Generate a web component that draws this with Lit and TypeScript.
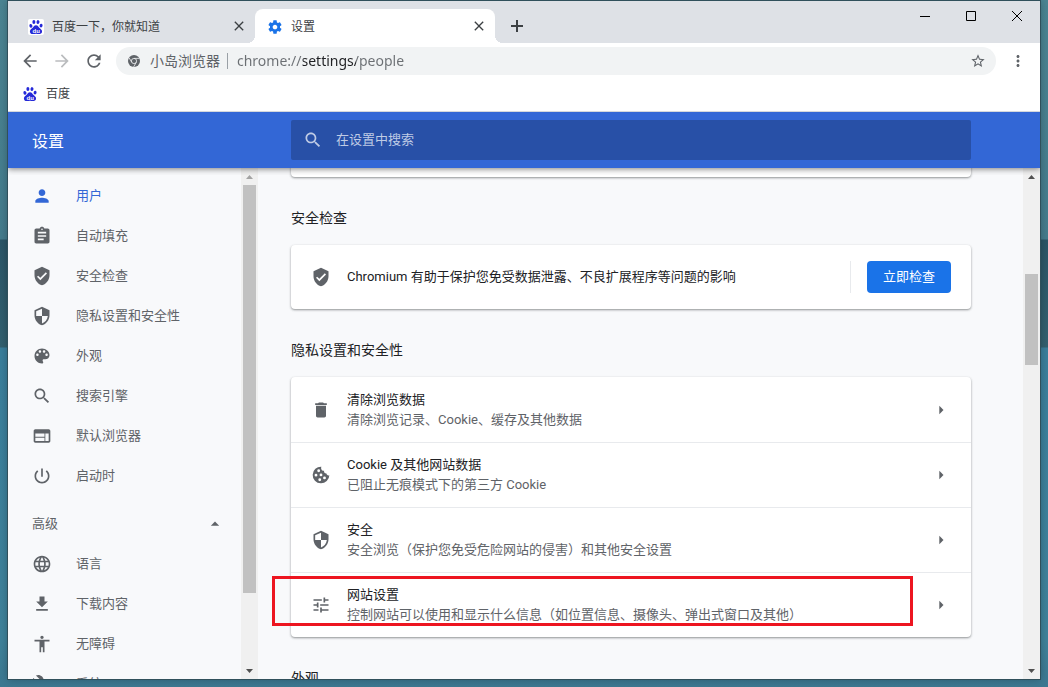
import { LitElement, html, svg, css } from "lit";
import { customElement, property, state } from "lit/decorators.js";
import { classMap } from "lit/directives/class-map.js";

const ICONS: Record<string, string> = {
  person:
    "M12 12c2.21 0 4-1.79 4-4s-1.79-4-4-4-4 1.79-4 4 1.79 4 4 4zm0 2c-2.67 0-8 1.34-8 4v2h16v-2c0-2.66-5.33-4-8-4z",
  assignment:
    "M19 3h-4.18C14.4 1.84 13.3 1 12 1c-1.3 0-2.4.84-2.82 2H5c-1.1 0-2 .9-2 2v14c0 1.1.9 2 2 2h14c1.1 0 2-.9 2-2V5c0-1.1-.9-2-2-2zm-7 0c.55 0 1 .45 1 1s-.45 1-1 1-1-.45-1-1 .45-1 1-1zm2 14H7v-2h7v2zm3-4H7v-2h10v2zm0-4H7V7h10v2z",
  verified:
    "M12 1L3 5v6c0 5.55 3.84 10.74 9 12 5.16-1.26 9-6.45 9-12V5l-9-4zm-2 16l-4-4 1.41-1.41L10 14.17l6.59-6.59L18 9l-8 8z",
  security:
    "M12 1L3 5v6c0 5.55 3.84 10.74 9 12 5.16-1.26 9-6.45 9-12V5l-9-4zm0 10.99h7c-.53 4.12-3.28 7.79-7 8.94V12H5V6.3l7-3.11v8.8z",
  palette:
    "M12 3c-4.97 0-9 4.03-9 9s4.03 9 9 9c.83 0 1.5-.67 1.5-1.5 0-.39-.15-.74-.39-1.01-.23-.26-.38-.61-.38-.99 0-.83.67-1.5 1.5-1.5H16c2.76 0 5-2.24 5-5 0-4.42-4.03-8-9-8zm-5.5 9c-.83 0-1.5-.67-1.5-1.5S5.67 9 6.5 9 8 9.67 8 10.5 7.33 12 6.5 12zm3-4C8.67 8 8 7.33 8 6.5S8.67 5 9.5 5s1.5.67 1.5 1.5S10.33 8 9.5 8zm5 0c-.83 0-1.5-.67-1.5-1.5S13.67 5 14.5 5s1.5.67 1.5 1.5S15.33 8 14.5 8zm3 4c-.83 0-1.5-.67-1.5-1.5S16.67 9 17.5 9s1.5.67 1.5 1.5-.67 1.5-1.5 1.5z",
  search:
    "M15.5 14h-.79l-.28-.27C15.41 12.59 16 11.11 16 9.5 16 5.91 13.09 3 9.5 3S3 5.91 3 9.5 5.91 16 9.5 16c1.61 0 3.09-.59 4.23-1.57l.27.28v.79l5 4.99L20.49 19l-4.99-5zm-6 0C7.01 14 5 11.99 5 9.5S7.01 5 9.5 5 14 7.01 14 9.5 11.99 14 9.5 14z",
  web: "M20 4H4c-1.1 0-1.99.9-1.99 2L2 18c0 1.1.9 2 2 2h16c1.1 0 2-.9 2-2V6c0-1.1-.9-2-2-2zm-5 14H4v-4h11v4zm0-5H4V9h11v4zm5 5h-4V9h4v9z",
  power:
    "M13 3h-2v10h2V3zm4.83 2.17l-1.42 1.42C17.99 7.86 19 9.81 19 12c0 3.87-3.13 7-7 7s-7-3.13-7-7c0-2.19 1.01-4.14 2.58-5.42L6.17 5.17C4.23 6.82 3 9.26 3 12c0 4.97 4.03 9 9 9s9-4.03 9-9c0-2.74-1.23-5.18-3.17-6.83z",
  language:
    "M11.99 2C6.47 2 2 6.48 2 12s4.47 10 9.99 10C17.52 22 22 17.52 22 12S17.52 2 11.99 2zm6.93 6h-2.95c-.32-1.25-.78-2.45-1.38-3.56 1.84.63 3.37 1.91 4.33 3.56zM12 4.04c.83 1.2 1.48 2.53 1.91 3.96h-3.82c.43-1.43 1.08-2.76 1.91-3.96zM4.26 14C4.1 13.36 4 12.69 4 12s.1-1.36.26-2h3.38c-.08.66-.14 1.32-.14 2 0 .68.06 1.34.14 2H4.26zm.82 2h2.95c.32 1.25.78 2.45 1.38 3.56-1.84-.63-3.37-1.9-4.33-3.56zm2.95-8H5.08c.96-1.66 2.49-2.93 4.33-3.56C8.81 5.55 8.35 6.75 8.03 8zM12 19.96c-.83-1.2-1.48-2.53-1.91-3.96h3.82c-.43 1.43-1.08 2.76-1.91 3.96zM14.34 14H9.66c-.09-.66-.16-1.32-.16-2 0-.68.07-1.35.16-2h4.68c.09.65.16 1.32.16 2 0 .68-.07 1.34-.16 2zm.25 5.56c.6-1.11 1.06-2.31 1.38-3.56h2.95c-.96 1.65-2.49 2.93-4.33 3.56zM16.36 14c.08-.66.14-1.32.14-2 0-.68-.06-1.34-.14-2h3.38c.16.64.26 1.31.26 2s-.1 1.36-.26 2h-3.38z",
  download: "M19 9h-4V3H9v6H5l7 7 7-7zM5 18v2h14v-2H5z",
  accessibility:
    "M12 2c1.1 0 2 .9 2 2s-.9 2-2 2-2-.9-2-2 .9-2 2-2zm9 7h-6v13h-2v-6h-2v6H9V9H3V7h18v2z",
  build:
    "M22.7 19l-9.1-9.1c.9-2.3.4-5-1.5-6.9-2-2-5-2.4-7.4-1.3L9 6 6 9 1.6 4.7C.4 7.1.9 10.1 2.9 12.1c1.9 1.9 4.6 2.4 6.9 1.5l9.1 9.1c.4.4 1 .4 1.4 0l2.3-2.3c.5-.4.5-1.1.1-1.4z",
  delete:
    "M6 19c0 1.1.9 2 2 2h8c1.1 0 2-.9 2-2V7H6v12zM19 4h-3.5l-1-1h-5l-1 1H5v2h14V4z",
  tune: "M3 17v2h6v-2H3zM3 5v2h10V5H3zm10 16v-2h8v-2h-8v-2h-2v6h2zM7 9v2H3v2h4v2h2V9H7zm14 4v-2H11v2h10zm-6-4h2V7h4V5h-4V3h-2v6z",
  cookie:
    "M12.5 2A10 10 0 1 0 22 12.2c-.9.5-2 .3-2.7-.4-.5-.5-.7-1-.7-1.6-1.300 .3-2.700-.6-2.900-2-.1-.4 0-.8.1-1.200-2 .1-3.600-1.300-3.700-3.200 0-.6.1-1.200.4-1.800zM9.200 5.200a1.700 1.700 0 1 1 0 3.400 1.700 1.700 0 0 1 0-3.400zM6 10.500a1.700 1.700 0 1 1 0 3.400 1.700 1.700 0 0 1 0-3.400zM12 10.200a1.700 1.700 0 1 1 0 3.400 1.700 1.700 0 0 1 0-3.400zM10.500 16a1.700 1.700 0 1 1 0 3.400 1.700 1.700 0 0 1 0-3.400zM16.200 13.800a1.700 1.700 0 1 1 0 3.400 1.700 1.700 0 0 1 0-3.400z",
  settings:
    "M19.43 12.98c.04-.32.07-.64.07-.98s-.03-.66-.07-.98l2.11-1.65c.19-.15.24-.42.12-.64l-2-3.46c-.12-.22-.39-.3-.61-.22l-2.49 1c-.52-.4-1.080-.73-1.690-.98l-.38-2.650C14.46 2.180 14.250 2 14 2h-4c-.25 0-.46.18-.49.42l-.38 2.650c-.61.25-1.170.59-1.690.98l-2.490-1c-.23-.09-.49 0-.61.22l-2 3.460c-.13.22-.07.49.12.64l2.110 1.650c-.04.32-.07.65-.07.98s.03.66.07.98l-2.110 1.650c-.19.15-.24.42-.12.64l2 3.460c.12.22.39.3.61.22l2.490-1c.52.4 1.080.73 1.690.98l.38 2.650c.03.24.24.42.49.42h4c.25 0 .46-.18.49-.42l.38-2.650c.61-.25 1.170-.59 1.690-.98l2.490 1c.23.09.49 0 .61-.22l2-3.460c.12-.22.07-.49-.12-.64l-2.110-1.650zM12 15.500c-1.930 0-3.500-1.570-3.500-3.500s1.570-3.500 3.500-3.500 3.500 1.570 3.500 3.500-1.570 3.500-3.500 3.500z",
  back: "M20 11H7.83l5.59-5.59L12 4l-8 8 8 8 1.41-1.41L7.83 13H20v-2z",
  forward: "M12 4l-1.41 1.41L16.17 11H4v2h12.17l-5.58 5.59L12 20l8-8z",
  refresh:
    "M17.65 6.35C16.2 4.9 14.21 4 12 4c-4.42 0-7.99 3.58-7.99 8s3.57 8 7.99 8c3.73 0 6.84-2.55 7.73-6h-2.08c-.82 2.33-3.04 4-5.65 4-3.31 0-6-2.69-6-6s2.69-6 6-6c1.66 0 3.14.69 4.22 1.78L13 11h7V4l-2.35 2.35z",
  star: "M22 9.24l-7.19-.62L12 2 9.19 8.63 2 9.24l5.46 4.73L5.82 21 12 17.27 18.18 21l-1.63-7.03L22 9.24zM12 15.4l-3.76 2.27 1-4.28-3.32-2.88 4.38-.38L12 6.1l1.71 4.04 4.38.38-3.32 2.88 1 4.28L12 15.4z",
  more: "M12 8c1.1 0 2-.9 2-2s-.9-2-2-2-2 .9-2 2 .9 2 2 2zm0 2c-1.1 0-2 .9-2 2s.9 2 2 2 2-.9 2-2-.9-2-2-2zm0 6c-1.1 0-2 .9-2 2s.9 2 2 2 2-.9 2-2-.9-2-2-2z",
  dropUp: "M7 14l5-5 5 5z",
  dropRight: "M10 17l5-5-5-5z",
  close:
    "M19 6.41L17.59 5 12 10.59 6.41 5 5 6.41 10.59 12 5 17.59 6.41 19 12 13.41 17.59 19 19 17.59 13.41 12z",
};

@customElement("ui-icon")
class UiIcon extends LitElement {
  @property() name = "";
  @property({ type: Number }) size = 20;
  static styles = css`
    :host {
      display: inline-flex;
      flex: none;
    }
    svg {
      display: block;
      fill: currentColor;
    }
  `;
  render() {
    return html`<svg width=${this.size} height=${this.size} viewBox="0 0 24 24" aria-hidden="true">
      ${svg`<path fill-rule="evenodd" d=${ICONS[this.name] ?? ""}></path>`}
    </svg>`;
  }
}

@customElement("paw-logo")
class PawLogo extends LitElement {
  static styles = css`
    :host {
      display: inline-flex;
      flex: none;
    }
    svg {
      display: block;
      border-radius: 2px;
      background: #fff;
    }
    .blue {
      fill: #2529d8;
    }
    .letters {
      fill: #fff;
      font: bold 6px "Liberation Sans", Arial, sans-serif;
    }
  `;
  render() {
    return html`<svg width="16" height="16" viewBox="0 0 16 16" aria-hidden="true">
      <g class="blue">
        <ellipse cx="2.900" cy="6.900" rx="1.500" ry="1.900" transform="rotate(-15 2.900 6.900)" />
        <ellipse cx="5.900" cy="3.100" rx="1.500" ry="2" />
        <ellipse cx="10" cy="3.100" rx="1.500" ry="2" transform="rotate(10 10 3.100)" />
        <ellipse cx="13.100" cy="6.600" rx="1.500" ry="1.900" transform="rotate(10 13.100 6.600)" />
        <path
          d="M8 6.300c1.700 0 2.400 1.400 3.300 2.500 1.100 1.200 2.800 1.900 2.800 3.700 0 1.700-1.300 2.600-2.800 2.500-1.200 0-2-.3-3.300-.3s-2.100.3-3.300.3c-1.600 0-2.800-.9-2.800-2.600 0-1.700 1.700-2.400 2.800-3.600C5.600 7.700 6.300 6.300 8 6.300z"
        />
      </g>
      <text class="letters" x="4.500" y="13.700">du</text>
    </svg>`;
  }
}

@customElement("scroll-rail")
class ScrollRail extends LitElement {
  @property({ type: Number }) before = 0;
  @property({ type: Number }) thumb = 1;
  @property({ type: Number }) after = 1;
  @property({ type: Boolean }) top = false;
  static styles = css`
    :host {
      display: flex;
      flex-direction: column;
      flex: none;
      width: 17px;
      background: #f0f0f0;
    }
    button {
      display: flex;
      align-items: center;
      justify-content: center;
      height: 17px;
      flex: none;
      padding: 0;
      border: 0;
      background: none;
      color: #505050;
    }
    .dim {
      color: #a3a3a3;
    }
    .track {
      display: flex;
      flex-direction: column;
      flex: 1;
    }
    .thumb {
      margin: 0 2px;
      background: #c1c1c1;
    }
    svg {
      display: block;
      fill: currentColor;
    }
  `;
  render() {
    return html`
      <button class=${classMap({ dim: this.top })} aria-label="向上滚动" tabindex="-1">
        <svg width="7" height="4" viewBox="0 0 7 4"><path d="M0 4L3.500 0 7 4z" /></svg>
      </button>
      <div class="track">
        <div style="flex:${this.before}"></div>
        <div class="thumb" style="flex:${this.thumb}"></div>
        <div style="flex:${this.after}"></div>
      </div>
      <button aria-label="向下滚动" tabindex="-1">
        <svg width="7" height="4" viewBox="0 0 7 4"><path d="M0 0L3.500 4 7 0z" /></svg>
      </button>
    `;
  }
}

interface NavItem {
  icon: string;
  label: string;
}

const BASIC: NavItem[] = [
  { icon: "person", label: "用户" },
  { icon: "assignment", label: "自动填充" },
  { icon: "verified", label: "安全检查" },
  { icon: "security", label: "隐私设置和安全性" },
  { icon: "palette", label: "外观" },
  { icon: "search", label: "搜索引擎" },
  { icon: "web", label: "默认浏览器" },
  { icon: "power", label: "启动时" },
];

const ADVANCED: NavItem[] = [
  { icon: "language", label: "语言" },
  { icon: "download", label: "下载内容" },
  { icon: "accessibility", label: "无障碍" },
  { icon: "build", label: "系统" },
];

const PRIVACY = [
  { icon: "delete", title: "清除浏览数据", note: "清除浏览记录、Cookie、缓存及其他数据" },
  { icon: "cookie", title: "Cookie 及其他网站数据", note: "已阻止无痕模式下的第三方 Cookie" },
  { icon: "security", title: "安全", note: "安全浏览（保护您免受危险网站的侵害）和其他安全设置" },
  {
    icon: "tune",
    title: "网站设置",
    note: "控制网站可以使用和显示什么信息（如位置信息、摄像头、弹出式窗口及其他）",
    marked: true,
  },
];

@customElement("app-root")
class AppRoot extends LitElement {
  @state() private selected = "用户";

  static styles = css`
    :host {
      display: block;
      box-sizing: border-box;
      height: 100vh;
      padding: 1px 8px 8px;
      background: linear-gradient(
        #4b8492 0,
        #447b8c 239px,
        #2b5566 240px,
        #33606f 347px,
        #3a7e9b 348px,
        #3f829a 640px,
        #3c7790 100%
      );
      font: 13px/20px Roboto, "Noto Sans CJK SC", sans-serif;
      color: #202124;
    }
    * {
      box-sizing: border-box;
    }
    button,
    input {
      font: inherit;
      color: inherit;
      margin: 0;
      padding: 0;
      border: 0;
      background: none;
      outline: 0;
    }
    a {
      color: inherit;
      text-decoration: none;
    }
    h1,
    h2 {
      margin: 0;
      font-weight: 400;
    }
    .window {
      display: flex;
      flex-direction: column;
      height: 100%;
      background: #fff;
      box-shadow: 0 0 0 1px #30505b, 0 0 8px rgba(0, 0, 0, 0.3);
    }
    .strip {
      display: flex;
      flex: none;
      height: 42px;
      padding-left: 8px;
      background: #dee1e6;
      font: 12px/18px "Open Sans", "Noto Sans CJK SC", sans-serif;
      color: #3c4043;
    }
    .tab {
      position: relative;
      display: flex;
      align-items: center;
      width: 239px;
      margin-top: 8px;
      padding: 0 8px 0 12px;
      border-radius: 8px 8px 0 0;
    }
    .tab.active {
      width: 240px;
      background: #fff;
    }
    .tab.active::before,
    .tab.active::after {
      content: "";
      position: absolute;
      bottom: 0;
      width: 8px;
      height: 8px;
    }
    .tab.active::before {
      right: 100%;
      background: radial-gradient(circle at 0 0, #dee1e6 8px, #fff 8px);
    }
    .tab.active::after {
      left: 100%;
      background: radial-gradient(circle at 100% 0, #dee1e6 8px, #fff 8px);
    }
    .tab a {
      display: flex;
      align-items: center;
      gap: 8px;
      flex: 1;
      padding-top: 1px;
    }
    .blue {
      color: #1a73e8;
    }
    .square {
      display: flex;
      align-items: center;
      justify-content: center;
      flex: none;
      width: 16px;
      height: 16px;
    }
    .new {
      width: 28px;
      height: 28px;
      margin: 11px 0 0 8px;
    }
    .controls {
      display: flex;
      height: 29px;
      margin-left: auto;
      color: #000;
    }
    .controls button {
      display: flex;
      align-items: center;
      justify-content: center;
      width: 46px;
    }
    .line {
      display: block;
      fill: none;
      stroke: currentColor;
    }
    .toolbar {
      display: flex;
      align-items: center;
      flex: none;
      height: 36px;
      padding: 0 6px;
      color: #5f6368;
    }
    .tool {
      display: flex;
      align-items: center;
      justify-content: center;
      flex: none;
      width: 32px;
      height: 28px;
    }
    .tool:disabled {
      color: #babcbe;
    }
    .omnibox {
      display: flex;
      align-items: center;
      flex: 1;
      min-width: 0;
      height: 28px;
      margin: 0 6px;
      padding: 0 10px 0 12px;
      border-radius: 14px;
      background: #f1f3f4;
      font: 14px/20px "Noto Sans", "Noto Sans CJK SC", sans-serif;
    }
    .site {
      flex: none;
      margin-left: 10px;
    }
    .bar {
      flex: none;
      width: 1px;
      height: 16px;
      margin: 0 9px 0 7px;
      background: #9aa0a6;
    }
    .url {
      flex: 1;
      min-width: 0;
      background: linear-gradient(90deg, #6b6f73 66px, #202124 66px, #202124 119px, #6b6f73 119px);
      -webkit-background-clip: text;
      background-clip: text;
      color: transparent;
    }
    .bookmarks {
      display: flex;
      align-items: center;
      flex: none;
      height: 33px;
      padding: 0 14px 2px;
      border-bottom: 1px solid #d5d8dc;
      font: 12px/18px "Open Sans", "Noto Sans CJK SC", sans-serif;
      color: #3c4043;
    }
    .bookmarks a {
      display: flex;
      align-items: center;
      gap: 8px;
    }
    .header {
      position: relative;
      z-index: 1;
      display: grid;
      grid-template-columns: 283px minmax(0, 680px) 1fr;
      align-items: center;
      flex: none;
      height: 56px;
      background: #3367d6;
      box-shadow: 0 1px 6px rgba(0, 0, 0, 0.5);
      clip-path: inset(0 0 -7px 0);
      color: #fff;
    }
    .header h1 {
      padding: 4px 0 0 24px;
      font-size: 16px;
      line-height: 24px;
    }
    .search {
      display: flex;
      align-items: center;
      gap: 13px;
      height: 40px;
      padding: 0 12px;
      border-radius: 2px;
      background: #2850a7;
      color: #bfcbe5;
    }
    .search input {
      flex: 1;
      min-width: 0;
    }
    .search input::placeholder {
      color: #bfcbe5;
      opacity: 1;
    }
    .body {
      display: flex;
      flex: 1;
      min-height: 0;
      background: #f8f9fb;
    }
    .side {
      display: flex;
      flex: none;
      width: 250px;
    }
    nav {
      flex: 1;
      overflow: hidden;
      padding-top: 8px;
      color: #5f6368;
    }
    .item {
      display: flex;
      align-items: center;
      gap: 24px;
      height: 40px;
      padding-left: 24px;
    }
    .item.on {
      color: #3367d6;
    }
    .advanced {
      display: flex;
      align-items: center;
      justify-content: space-between;
      width: 100%;
      height: 40px;
      margin-top: 8px;
      padding: 0 16px 0 24px;
    }
    main {
      flex: 1;
      min-width: 0;
      overflow: hidden;
      padding: 0 52px 0 33px;
    }
    .column {
      max-width: 680px;
    }
    .card {
      border-radius: 4px;
      background: #fff;
      box-shadow: 0 1px 2px rgba(60, 64, 67, 0.4), 0 1px 3px rgba(60, 64, 67, 0.2);
    }
    .previous {
      height: 64px;
      margin-top: -55px;
    }
    h2 {
      padding: 31px 0 17px;
      font-size: 14px;
      line-height: 20px;
    }
    .check {
      display: flex;
      align-items: center;
      height: 64px;
      padding: 0 20px;
      gap: 16px;
    }
    .check p {
      flex: 1;
      margin: 0;
    }
    .primary {
      height: 32px;
      padding: 0 16px;
      border-radius: 4px;
      background: #1a73e8;
      color: #fff;
    }
    .rule {
      width: 1px;
      height: 32px;
      background: #e8eaed;
    }
    .row {
      position: relative;
      display: flex;
      align-items: center;
      gap: 16px;
      width: 100%;
      height: 65px;
      padding: 0 20px;
      text-align: left;
    }
    .row + .row {
      border-top: 1px solid #e8eaed;
    }
    .words {
      display: flex;
      flex-direction: column;
      flex: 1;
      min-width: 0;
    }
    .note,
    .grey {
      color: #5f6368;
    }
    .mark {
      position: absolute;
      inset: 3px 58px 11px -19px;
      border: 3px solid #ed1520;
      pointer-events: none;
    }
  `;

  private item(entry: NavItem) {
    return html`<a
      href="#${entry.icon}"
      class=${classMap({ item: true, on: entry.label === this.selected })}
      @click=${() => (this.selected = entry.label)}
      ><ui-icon name=${entry.icon}></ui-icon><span>${entry.label}</span></a
    >`;
  }

  render() {
    return html`
      <div class="window">
        <div class="strip">
          <div class="tab">
            <a href="#tab-1"><paw-logo></paw-logo>百度一下，你就知道</a>
            <button class="square" aria-label="关闭标签页"><ui-icon name="close" size="16"></ui-icon></button>
          </div>
          <div class="tab active">
            <a href="#tab-2"><ui-icon class="blue" name="settings" size="16"></ui-icon>设置</a>
            <button class="square" aria-label="关闭标签页"><ui-icon name="close" size="16"></ui-icon></button>
          </div>
          <button class="square new" aria-label="新标签页">
            <svg class="line" width="12" height="12" stroke-width="2"><path d="M6 0v12M0 6h12" /></svg>
          </button>
          <div class="controls">
            <button aria-label="最小化">
              <svg class="line" width="10" height="10"><path d="M0 5.500h10" /></svg>
            </button>
            <button aria-label="最大化">
              <svg class="line" width="10" height="10"><path d="M.5.5h9v9h-9z" /></svg>
            </button>
            <button aria-label="关闭">
              <svg class="line" width="10" height="10"><path d="M0 0l10 10M10 0L0 10" /></svg>
            </button>
          </div>
        </div>

        <div class="toolbar">
          <button class="tool" aria-label="后退"><ui-icon name="back"></ui-icon></button>
          <button class="tool" aria-label="前进" disabled><ui-icon name="forward"></ui-icon></button>
          <button class="tool" aria-label="重新加载"><ui-icon name="refresh"></ui-icon></button>
          <div class="omnibox">
            <svg width="12" height="12" viewBox="0 0 12 12" aria-hidden="true">
              <circle cx="6" cy="6" r="6" fill="#5f6368" />
              <g fill="none" stroke="#f1f3f4" stroke-width=".8">
                <circle cx="6" cy="6" r="2.600" />
                <path d="M6 3.400h5.400M3.750 7.300L1 2.700M8.250 7.300L5.600 12" />
              </g>
            </svg>
            <label class="site" for="url">小岛浏览器</label>
            <span class="bar"></span>
            <input id="url" class="url" .value=${"chrome://settings/people"} />
            <button class="square" aria-label="为此标签页添加书签">
              <ui-icon name="star" size="16"></ui-icon>
            </button>
          </div>
          <button class="tool" aria-label="菜单"><ui-icon name="more" size="18"></ui-icon></button>
        </div>

        <div class="bookmarks">
          <a href="#bookmark"><paw-logo></paw-logo>百度</a>
        </div>

        <div class="header">
          <h1>设置</h1>
          <label class="search">
            <ui-icon name="search"></ui-icon>
            <input type="search" placeholder="在设置中搜索" />
          </label>
        </div>

        <div class="body">
          <div class="side">
            <nav>
              ${BASIC.map((entry) => this.item(entry))}
              <button class="advanced" aria-expanded="true">
                高级<ui-icon name="dropUp"></ui-icon>
              </button>
              ${ADVANCED.map((entry) => this.item(entry))}
            </nav>
            <scroll-rail top .before=${0} .thumb=${408} .after=${69}></scroll-rail>
          </div>

          <main>
            <div class="column">
              <div class="card previous"></div>

              <h2>安全检查</h2>
              <div class="card check">
                <ui-icon class="grey" name="verified"></ui-icon>
                <p>Chromium 有助于保护您免受数据泄露、不良扩展程序等问题的影响</p>
                <span class="rule"></span>
                <button class="primary">立即检查</button>
              </div>

              <h2>隐私设置和安全性</h2>
              <div class="card">
                ${PRIVACY.map(
                  (row) => html`<button class="row">
                    <ui-icon class="grey" name=${row.icon}></ui-icon>
                    <span class="words">
                      <span>${row.title}</span>
                      <span class="note">${row.note}</span>
                    </span>
                    <ui-icon class="grey" name="dropRight"></ui-icon>
                    ${row.marked ? html`<span class="mark"></span>` : ""}
                  </button>`
                )}
              </div>

              <h2>外观</h2>
            </div>
          </main>
          <scroll-rail .before=${89} .thumb=${91} .after=${297}></scroll-rail>
        </div>
      </div>
    `;
  }
}
